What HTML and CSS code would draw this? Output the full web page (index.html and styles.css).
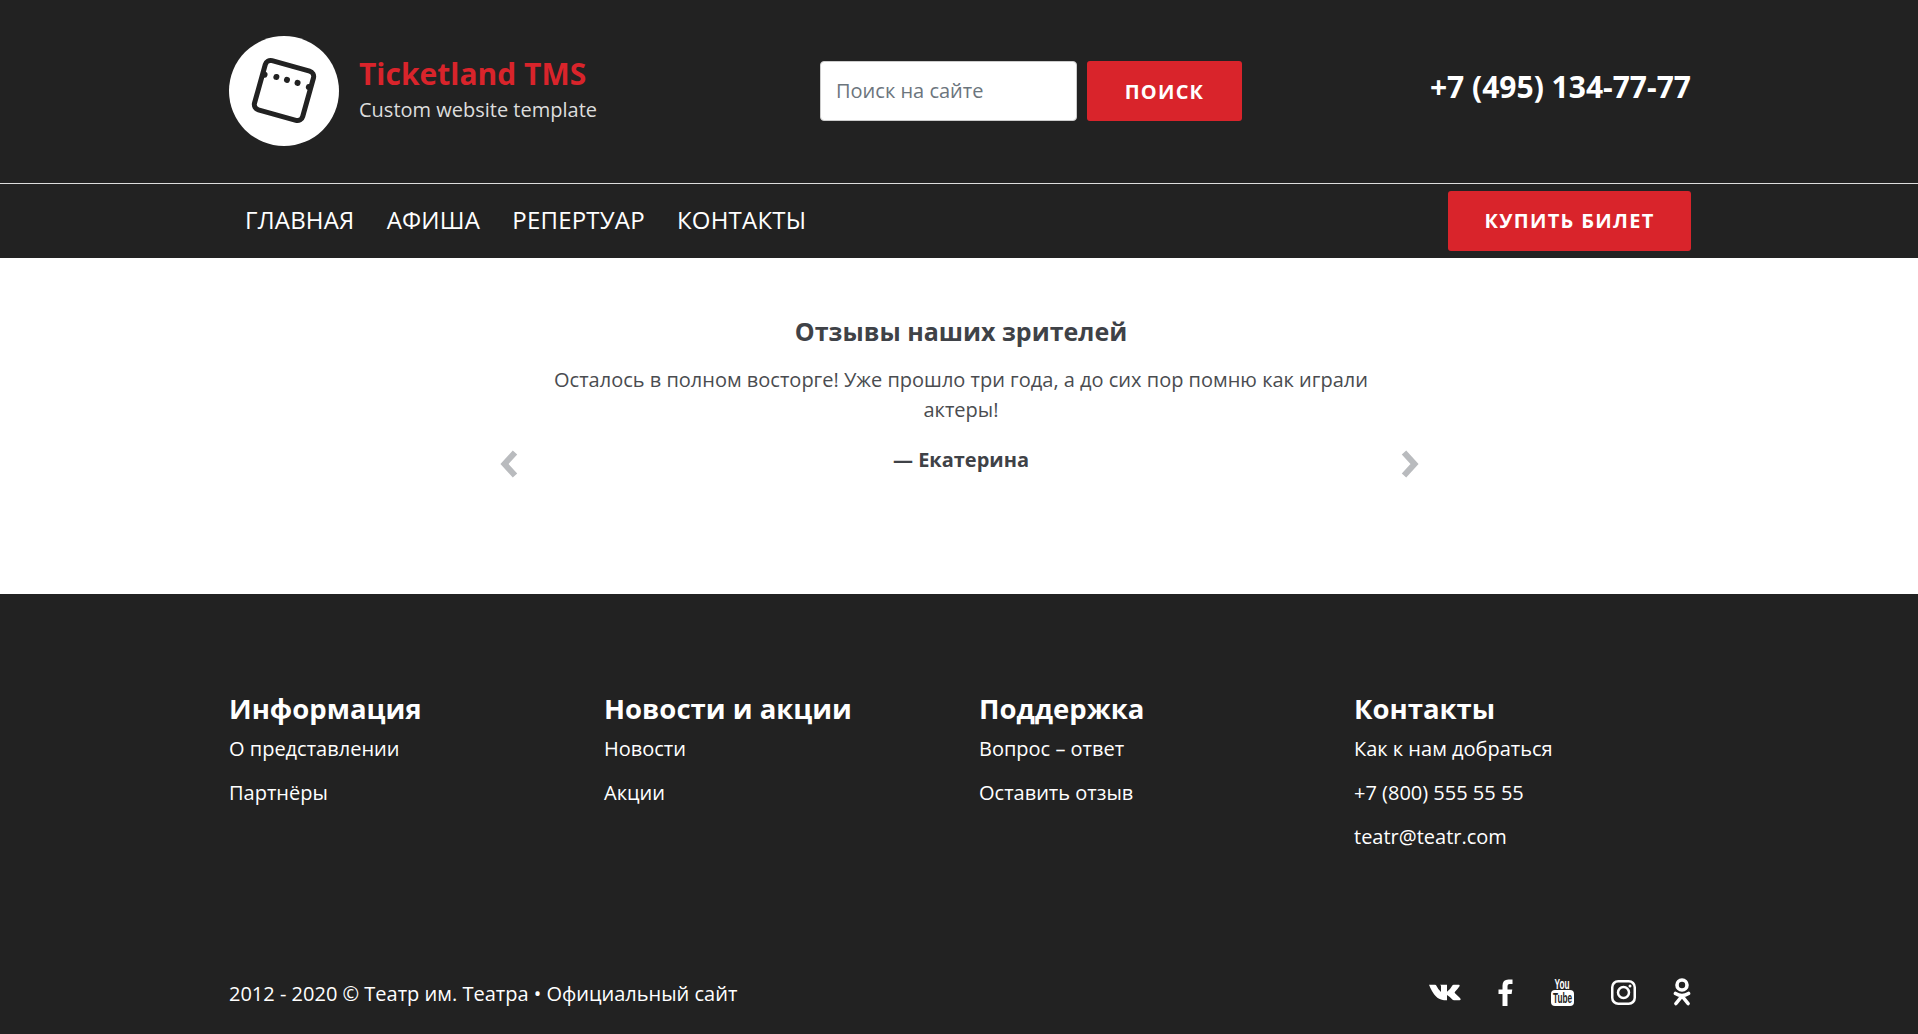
FILE: index.html
```html
<!DOCTYPE html>
<html lang="ru">
<head>
  <meta charset="UTF-8">
  <meta name="viewport" content="width=device-width, initial-scale=1.0">
  <title>Ticketland TMS</title>
  <link rel="stylesheet" href="styles.css">
</head>
<body>
  <!-- Header -->
  <header class="top">
    <div class="container top-row">
      <a class="logo" href="#">
        <span class="logo-circle">
          <svg viewBox="0 0 110 110" width="110" height="110" fill="none">
            <g transform="translate(55 54.500) rotate(15.600)">
              <rect x="-25" y="-25.500" width="50" height="51" rx="5.500" stroke="#222" stroke-width="5"/>
              <circle cx="-23" cy="-10" r="3" fill="#222"/>
              <circle cx="23" cy="-10" r="3" fill="#222"/>
              <circle cx="-11" cy="-11" r="3" fill="#222"/>
              <circle cx="0" cy="-11" r="3" fill="#222"/>
              <circle cx="11" cy="-11" r="3" fill="#222"/>
            </g>
          </svg>
        </span>
        <span class="logo-text">
          <span class="logo-title">Ticketland TMS</span>
          <span class="logo-sub">Custom website template</span>
        </span>
      </a>
      <form class="search">
        <input class="search-input" type="text" placeholder="Поиск на сайте">
        <button class="btn search-btn" type="button">ПОИСК</button>
      </form>
      <a class="phone" href="#">+7 (495) 134-77-77</a>
    </div>
  </header>

  <!-- Menu -->
  <nav class="menu">
    <div class="container menu-row">
      <div class="menu-links">
        <a href="#">ГЛАВНАЯ</a>
        <a href="#">АФИША</a>
        <a href="#">РЕПЕРТУАР</a>
        <a href="#">КОНТАКТЫ</a>
      </div>
      <a class="btn buy-btn" href="#">КУПИТЬ БИЛЕТ</a>
    </div>
  </nav>

  <!-- Reviews -->
  <main class="reviews">
    <div class="review-box">
      <a class="arrow" href="#">
        <svg viewBox="0 0 18 30" width="18" height="30"><path d="M15 3.500 L4.500 15 L15 26.500" fill="none" stroke="#b9bbbe" stroke-width="6"/></svg>
      </a>
      <div class="review">
        <h2>Отзывы наших зрителей</h2>
        <p>Осталось в полном восторге! Уже прошло три года, а до сих пор помню как играли актеры!</p>
        <strong>— Екатерина</strong>
      </div>
      <a class="arrow" href="#">
        <svg viewBox="0 0 18 30" width="18" height="30"><path d="M3 3.500 L13.500 15 L3 26.500" fill="none" stroke="#b9bbbe" stroke-width="6"/></svg>
      </a>
    </div>
  </main>

  <!-- Footer -->
  <footer class="footer">
    <div class="container">
      <div class="footer-cols">
        <div class="footer-col">
          <h3>Информация</h3>
          <a href="#">О представлении</a>
          <a href="#">Партнёры</a>
        </div>
        <div class="footer-col">
          <h3>Новости и акции</h3>
          <a href="#">Новости</a>
          <a href="#">Акции</a>
        </div>
        <div class="footer-col">
          <h3>Поддержка</h3>
          <a href="#">Вопрос – ответ</a>
          <a href="#">Оставить отзыв</a>
        </div>
        <div class="footer-col">
          <h3>Контакты</h3>
          <a href="#">Как к нам добраться</a>
          <a href="#">+7 (800) 555 55 55</a>
          <a href="#">teatr@teatr.com</a>
        </div>
      </div>
      <div class="footer-bottom">
        <span class="copy">2012 - 2020 © Театр им. Театра • Официальный сайт</span>
        <div class="socials">
          <a href="#">
            <svg viewBox="0 0 32 20" width="32" height="17" preserveAspectRatio="none"><path d="M0 1 H6 Q7 1 7.400 2 Q9.500 7 12 9.500 V2.500 Q12 1.500 11 1 H18 V9 Q21 7 23.500 1.500 Q23.800 1 24.500 1 H30 Q31 1 30.500 2.500 Q28.500 6 26 9 Q25.300 10 26 10.800 L31 16.500 Q32.500 19 30.500 19 H25 Q24 19 23.300 18.200 Q21 15 18 13 V19 H15 Q6 19 0 1 Z" fill="#fff"/></svg>
          </a>
          <a href="#">
            <svg viewBox="0 0 15 27" width="15" height="27"><path d="M4.500 27 V15 H0.500 V10.500 H4.500 V6.500 Q4.500 0.500 10.500 0.500 H14.500 V5 H11.500 Q9.500 5 9.500 7 V10.500 H14.300 L13.600 15 H9.500 V27 Z" fill="#fff"/></svg>
          </a>
          <a href="#">
            <svg class="yt" viewBox="0 0 24 28" width="24" height="28">
              <text class="yt-you" x="12" y="11" text-anchor="middle" textLength="15" lengthAdjust="spacingAndGlyphs">You</text>
              <rect x="1" y="12" width="23" height="16" rx="4" fill="#fff"/>
              <text class="yt-tube" x="12.500" y="25" text-anchor="middle" textLength="19" lengthAdjust="spacingAndGlyphs">Tube</text>
            </svg>
          </a>
          <a href="#">
            <svg viewBox="0 0 25 25" width="25" height="25" fill="none" stroke="#fff" stroke-width="2.500"><rect x="1.250" y="1.250" width="22.500" height="22.500" rx="6"/><circle cx="12.500" cy="12.500" r="5.500"/><circle cx="19" cy="6" r="1.500" fill="#fff" stroke="none"/></svg>
          </a>
          <a href="#">
            <svg viewBox="0 0 18 28" width="18" height="28" fill="none" stroke="#fff" stroke-width="3.600" stroke-linecap="round"><circle cx="9" cy="7" r="5"/><path d="M2.500 15.500 Q9 19.500 15.500 15.500 M9 18 L3 25.500 M9 18 L15 25.500"/></svg>
          </a>
        </div>
      </div>
    </div>
  </footer>
</body>
</html>
```

FILE: styles.css
```css
/* General */
* {
  box-sizing: border-box;
}

body {
  margin: 0;
  font-family: "Open Sans", sans-serif;
  font-size: 20px;
  background: #fff;
  color: #4a4c50;
}

a {
  color: inherit;
  text-decoration: none;
}

.container {
  width: 1462px;
  margin-left: 229px;
}

.btn {
  display: flex;
  align-items: center;
  justify-content: center;
  height: 60px;
  background: #d9242b;
  color: #fff;
  border: none;
  border-radius: 3px;
  font-family: inherit;
  font-weight: 700;
}

/* Header */
.top {
  height: 183px;
  background: #222;
}

.top-row {
  display: flex;
  align-items: flex-start;
}

.logo {
  display: flex;
  width: 591px;
  padding-top: 36px;
}

.logo-circle {
  display: block;
  width: 110px;
  height: 110px;
  border-radius: 50%;
  background: #fff;
}

.logo-circle svg {
  display: block;
}

.logo-text {
  display: flex;
  flex-direction: column;
  margin-left: 20px;
  padding-top: 18px;
}

.logo-title {
  color: #d9242b;
  font-size: 30px;
  font-weight: 700;
  line-height: 40px;
}

.logo-sub {
  color: #ddd;
  font-size: 20px;
  line-height: 32px;
}

.search {
  display: flex;
  gap: 10px;
  margin-top: 61px;
}

.search-input {
  width: 257px;
  height: 60px;
  padding: 0 15px 2px;
  border: 1px solid #ccc;
  border-radius: 4px;
  background: #fff;
  font-family: inherit;
  font-size: 20px;
}

.search-input::placeholder {
  color: #6c757d;
  opacity: 1;
}

.search-btn {
  width: 155px;
  font-size: 20px;
  letter-spacing: 1.200px;
}

.phone {
  margin-left: auto;
  margin-top: 67px;
  color: #fff;
  font-size: 30px;
  font-weight: 700;
  line-height: 40px;
}

/* Menu */
.menu {
  height: 75px;
  background: #222;
  border-top: 1px solid #ddd;
}

.menu-row {
  display: flex;
  justify-content: space-between;
  padding-top: 7px;
}

.menu-links {
  display: flex;
  align-items: center;
  gap: 32.200px;
  padding-left: 16px;
  padding-bottom: 4px;
  color: #fff;
  font-size: 24px;
  letter-spacing: 0.200px;
}

.buy-btn {
  width: 243px;
  padding-bottom: 2px;
  font-size: 20px;
  letter-spacing: 1.300px;
}

/* Reviews */
.reviews {
  height: 336px;
  padding-top: 55px;
}

.review-box {
  display: flex;
  align-items: flex-start;
  justify-content: space-between;
  width: 919px;
  margin-left: 500px;
}

.arrow {
  margin-top: 136px;
}

.arrow svg {
  display: block;
}

.review {
  width: 823px;
  margin-left: 3px;
  text-align: center;
}

.review h2 {
  margin: 0;
  color: #3f4247;
  font-size: 25px;
  font-weight: 700;
  line-height: 36px;
}

.review p {
  margin: 16px 0 0;
  line-height: 30px;
}

.review strong {
  display: block;
  margin-top: 21px;
  color: #3f4247;
  font-weight: 700;
}

/* Footer */
.footer {
  height: 440px;
  background: #222;
  color: #fff;
}

.footer-cols {
  display: grid;
  grid-template-columns: repeat(4, 375px);
  height: 352px;
  padding-top: 96px;
}

.footer-col h3 {
  margin: 0 0 7px;
  font-size: 27.500px;
  font-weight: 700;
  line-height: 38px;
}

.footer-col a {
  display: block;
  line-height: 27px;
  margin-bottom: 17px;
}

.footer-bottom {
  display: flex;
  align-items: center;
  justify-content: space-between;
  height: 50px;
  margin-top: 22px;
}

.socials {
  display: flex;
  align-items: center;
  gap: 37px;
  padding-bottom: 2px;
}

.socials a {
  display: block;
}

.socials svg {
  display: block;
}

.yt {
  overflow: visible;
}

.yt-you {
  fill: #fff;
  font-family: "Liberation Sans Narrow", "Liberation Sans", sans-serif;
  font-size: 14px;
  font-weight: 700;
}

.yt-tube {
  fill: #222;
  font-family: "Liberation Sans Narrow", "Liberation Sans", sans-serif;
  font-size: 14px;
  font-weight: 700;
}
```
